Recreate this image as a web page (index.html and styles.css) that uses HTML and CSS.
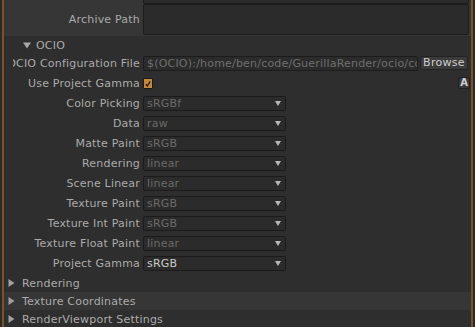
FILE: index.html
```html
<!DOCTYPE html>
<html>
<head>
<meta charset="utf-8">
<link rel="stylesheet" href="styles.css">
</head>
<body>
<div class="panel">
  <div class="top">
    <div class="top-row stub-row">
      <div></div>
      <div class="field stub"></div>
    </div>
    <div class="top-row archive-row">
      <div class="toplabel">Archive Path</div>
      <div class="field big"></div>
    </div>
  </div>

  <div class="subhead">
    <svg class="tri-down" width="8" height="7" viewBox="0 0 8 7"><path d="M0 0.5 H8 L4 6.5 Z" fill="#a8a8a8"/></svg>
    <span>OCIO</span>
  </div>

  <div class="rows">
    <div class="row">
      <div class="label"><span>OCIO Configuration File</span></div>
      <div class="cell">
        <div class="field text"><span>$(OCIO):/home/ben/code/GuerillaRender/ocio/config.ocio</span></div>
        <div class="btn">Browse</div>
      </div>
    </div>
    <div class="row">
      <div class="label"><span>Use Project Gamma</span></div>
      <div class="cell">
        <div class="check">
          <svg width="10" height="10" viewBox="0 0 10 10"><path d="M2.2 5.2 L4.2 7.6 L7.8 1.8" fill="none" stroke="#1a1208" stroke-width="1.5"/></svg>
        </div>
        <div class="abtn">A</div>
      </div>
    </div>
    <div class="row">
      <div class="label"><span>Color Picking</span></div>
      <div class="cell"><div class="drop dim"><span>sRGBf</span><i class="arrow"></i></div></div>
    </div>
    <div class="row">
      <div class="label"><span>Data</span></div>
      <div class="cell"><div class="drop dim"><span>raw</span><i class="arrow"></i></div></div>
    </div>
    <div class="row">
      <div class="label"><span>Matte Paint</span></div>
      <div class="cell"><div class="drop dim"><span>sRGB</span><i class="arrow"></i></div></div>
    </div>
    <div class="row">
      <div class="label"><span>Rendering</span></div>
      <div class="cell"><div class="drop dim"><span>linear</span><i class="arrow"></i></div></div>
    </div>
    <div class="row">
      <div class="label"><span>Scene Linear</span></div>
      <div class="cell"><div class="drop dim"><span>linear</span><i class="arrow"></i></div></div>
    </div>
    <div class="row">
      <div class="label"><span>Texture Paint</span></div>
      <div class="cell"><div class="drop dim"><span>sRGB</span><i class="arrow"></i></div></div>
    </div>
    <div class="row">
      <div class="label"><span>Texture Int Paint</span></div>
      <div class="cell"><div class="drop dim"><span>sRGB</span><i class="arrow"></i></div></div>
    </div>
    <div class="row">
      <div class="label"><span>Texture Float Paint</span></div>
      <div class="cell"><div class="drop dim"><span>linear</span><i class="arrow"></i></div></div>
    </div>
    <div class="row">
      <div class="label"><span>Project Gamma</span></div>
      <div class="cell"><div class="drop"><span>sRGB</span><i class="arrow"></i></div></div>
    </div>
  </div>

  <div class="sect">
    <svg class="tri-right" width="7" height="8" viewBox="0 0 7 8"><path d="M0.5 0 V8 L6.5 4 Z" fill="#a0a0a0"/></svg>
    <span>Rendering</span>
  </div>
  <div class="sect alt">
    <svg class="tri-right" width="7" height="8" viewBox="0 0 7 8"><path d="M0.5 0 V8 L6.5 4 Z" fill="#a0a0a0"/></svg>
    <span>Texture Coordinates</span>
  </div>
  <div class="sect">
    <svg class="tri-right" width="7" height="8" viewBox="0 0 7 8"><path d="M0.5 0 V8 L6.5 4 Z" fill="#a0a0a0"/></svg>
    <span>RenderViewport Settings</span>
  </div>
</div>
</body>
</html>
```

FILE: styles.css
```css
* { box-sizing: border-box; }

html, body {
  margin: 0;
  padding: 0;
  background: #2a2a2a;
  height: 100%;
  overflow: hidden;
}

body {
  font-family: "DejaVu Sans", sans-serif;
  font-size: 11px;
  letter-spacing: 0.2px;
  color: #ababab;
}

.panel {
  margin-left: 2px;
  width: 471px;
  min-height: 100%;
  border-left: 2px solid #7d5228;
  border-right: 2px solid #7d5228;
  background: #2e2e2e;
  display: flex;
  flex-direction: column;
}

.top {
  background: #363636;
  height: 36px;
}

.top-row {
  display: grid;
  grid-template-columns: 139px 326px;
}

.stub-row { height: 4px; }
.archive-row { height: 31px; }

.field {
  background: #2b2b2b;
  border: 1px solid #1c1c1c;
  border-radius: 2px;
}

.stub {
  border-top: none;
  border-radius: 0 0 2px 2px;
}

.toplabel {
  text-align: right;
  padding-right: 3px;
  line-height: 31px;
  color: #aaaaaa;
}

.subhead {
  height: 18px;
  display: flex;
  align-items: center;
  padding-left: 19px;
  color: #ababab;
}

.tri-down { margin-right: 5px; }

.rows {
  padding-left: 9px;
}

.row {
  display: grid;
  grid-template-columns: 130px 1fr;
  height: 20px;
}

.label {
  display: flex;
  justify-content: flex-end;
  overflow: hidden;
  padding-right: 3px;
  line-height: 19px;
  color: #ababab;
}

.label span {
  white-space: nowrap;
  flex-shrink: 0;
}

.cell {
  display: flex;
  align-items: flex-start;
}

.text {
  margin-top: 2px;
  width: 275px;
  height: 15px;
  overflow: hidden;
  white-space: nowrap;
  padding-left: 3px;
  line-height: 13px;
  color: #6f6f6f;
}

.btn {
  margin-top: 2px;
  margin-left: 2px;
  width: 48px;
  height: 14px;
  background: #3b3b3b;
  border: 1px solid #222;
  border-radius: 2px;
  color: #cfcfcf;
  text-align: center;
  line-height: 12px;
  letter-spacing: 0.3px;
}

.check {
  margin-top: 4px;
  width: 10px;
  height: 11px;
  background: #c4883c;
  border: 1px solid #1f1a14;
  border-radius: 1px;
  display: flex;
  align-items: center;
  justify-content: center;
}

.check svg { display: block; }

.abtn {
  margin-left: auto;
  margin-right: 1px;
  margin-top: 3px;
  width: 12px;
  height: 12px;
  background: #3a3a3a;
  border: 1px solid #1f1f1f;
  border-radius: 2px;
  color: #d2d2d2;
  font-size: 10px;
  font-weight: bold;
  line-height: 10px;
  text-align: center;
  letter-spacing: 0;
}

.drop {
  margin-top: 2px;
  width: 143px;
  height: 15px;
  background: #2b2b2b;
  border: 1px solid #1b1b1b;
  border-radius: 2px;
  display: flex;
  align-items: center;
  padding-left: 3px;
  padding-right: 4px;
  color: #cccccc;
  line-height: 13px;
}

.drop.dim { color: #6a6a6a; }

.drop span { flex: 1; }

.arrow {
  width: 0;
  height: 0;
  border-left: 3.5px solid transparent;
  border-right: 3.5px solid transparent;
  border-top: 5px solid #b8b8b8;
}

.sect {
  height: 18px;
  display: flex;
  align-items: center;
  padding-left: 4px;
  color: #ababab;
}

.sect.alt { background: #363636; }

.tri-right { margin-right: 7px; }
```
